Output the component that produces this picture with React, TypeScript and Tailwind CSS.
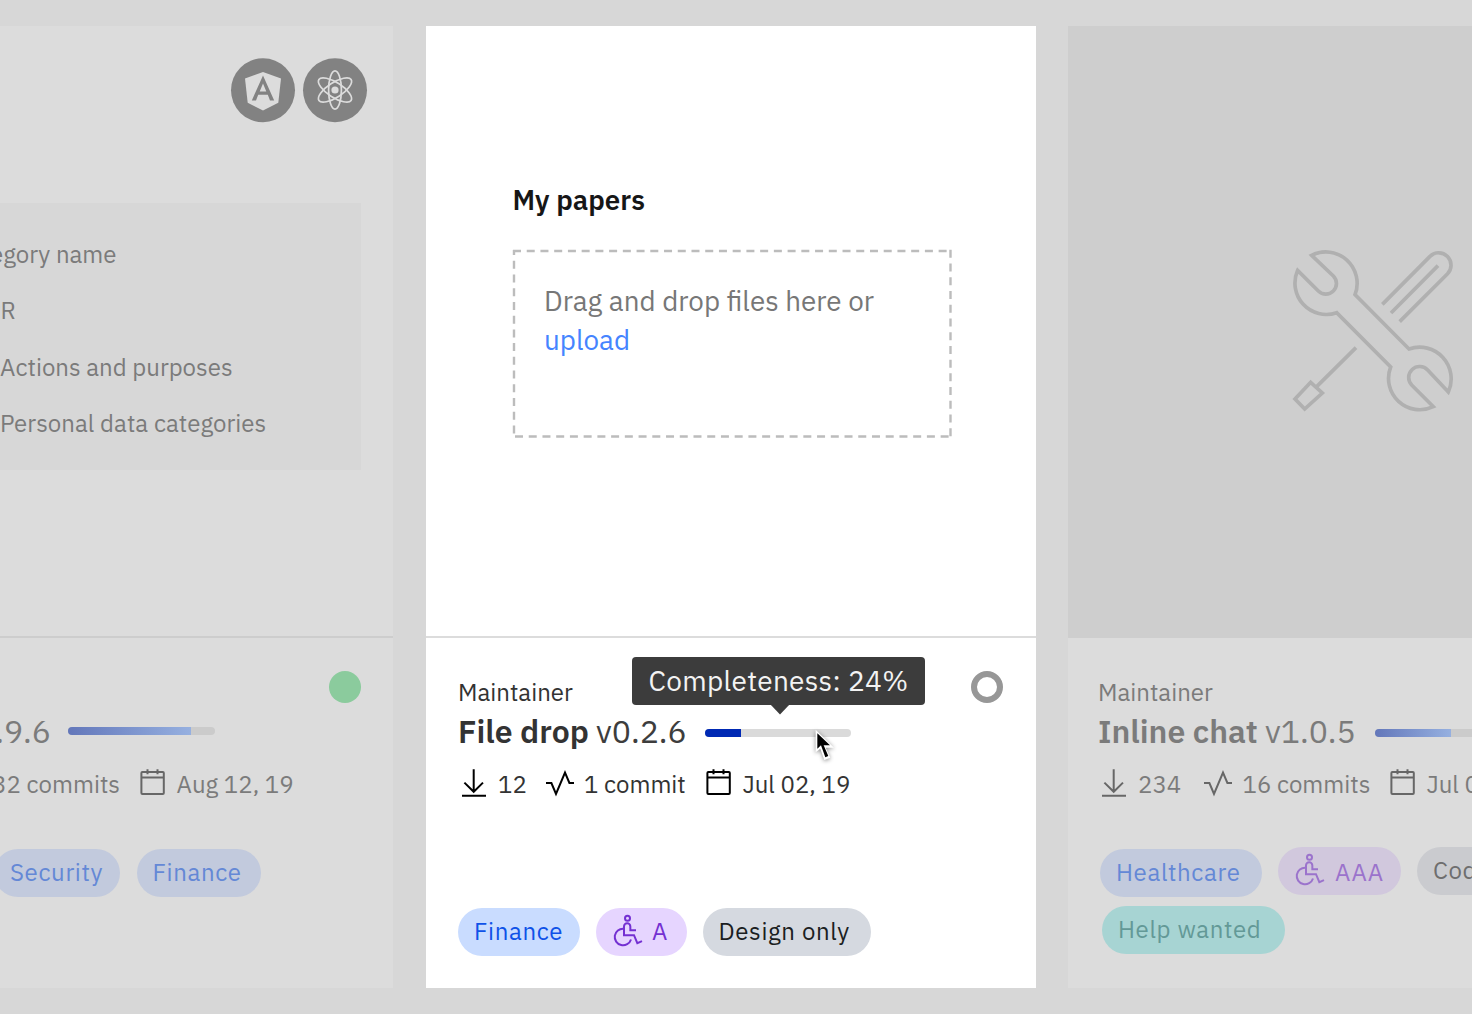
import type { ReactNode } from "react";

type IconProps = { className?: string };

function DownloadIcon({ className = "" }: IconProps) {
  return (
    <svg viewBox="0 0 32 32" fill="none" stroke="currentColor" strokeWidth="2" className={`h-8 w-8 shrink-0 ${className}`}>
      <path d="M15.7 .3V22.2M6.4 13.6l9.3 9.2 9.3-9.2M4 26.7h24" />
    </svg>
  );
}

function ActivityIcon({ className = "" }: IconProps) {
  return (
    <svg viewBox="0 0 32 32" fill="none" stroke="currentColor" strokeWidth="2" className={`h-8 w-8 shrink-0 ${className}`}>
      <path d="M2 14h5.4L12 25 21 3.500 25.400 14H30" />
    </svg>
  );
}

function CalendarIcon({ className = "" }: IconProps) {
  return (
    <svg viewBox="0 0 32 32" fill="none" stroke="currentColor" strokeWidth="2" className={`h-8 w-8 shrink-0 ${className}`}>
      <rect x="4.4" y="3" width="22.4" height="22" rx="1" />
      <path d="M4.4 8.4h22.4M10.5 .3v5M20.5 .3v5" />
    </svg>
  );
}

function WheelchairIcon() {
  return (
    <svg viewBox="51 40.5 96 108" fill="none" stroke="currentColor" strokeWidth="6" className="h-9 w-8 shrink-0">
      <circle cx="97.5" cy="53" r="7.5" />
      <path d="M123 89H106V78a9.500 9.500 0 0 0-19 0v26h30l10 24 14-6" />
      <path d="M86 84.5A25 25 0 1 0 108 117" />
    </svg>
  );
}

function AngularBadge() {
  return (
    <svg viewBox="231 58 64 64" className="h-16 w-16 overflow-visible">
      <circle cx="263" cy="90.3" r="32" fill="#828282" />
      <path fill="#dcdcdc" d="M263 72l18 6.500-2.700 24.200L263 110.500l-15.300-7.800L245 78.500z" />
      <path
        fill="#828282"
        fillRule="evenodd"
        d="M263 75.500L251.800 100.400H256L258.200 94.800H267.800L270 100.400H274.200zM263 83.500L266.300 91.400H259.700z"
      />
    </svg>
  );
}

function ReactBadge() {
  return (
    <svg viewBox="-32 -32 64 64" className="h-16 w-16 overflow-visible">
      <circle cy=".3" r="32" fill="#828282" />
      <g fill="none" stroke="#dcdcdc" strokeWidth="1.7">
        <ellipse rx="6.4" ry="19.2" />
        <ellipse rx="7.4" ry="19.2" transform="rotate(57)" />
        <ellipse rx="7.4" ry="19.2" transform="rotate(123)" />
      </g>
      <circle r="3.6" fill="#dcdcdc" />
    </svg>
  );
}

function ToolsIllustration() {
  return (
    <svg viewBox="0 0 606 600" fill="none" stroke="#b0b0b0" strokeWidth="11" className="ml-[202px] mt-[204px] h-[200px] w-[202px]">
      <path d="M125 76L190 138A31 31 0 0 1 145 183L83 121A94 94 0 0 0 200 248L362 411A94 94 0 0 0 490 530L425 465A32 32 0 0 1 473 420L535 486A95 95 0 0 0 417 357L255 194A94 94 0 0 0 125 76z" />
      <path d="M337 223L480 79A37 37 0 0 1 532 132L389 275M363 249L504 107M258 353L140 470M122 457l35 32-53 48-29-30z" />
    </svg>
  );
}

function DropOutline() {
  return (
    <svg viewBox="0 0 440 190" fill="none" stroke="#bcbcbc" strokeWidth="2.4" className="absolute -left-px top-0 h-[190px] w-[440px]">
      <path strokeDasharray="8 5.73" d="M1 2H439" />
      <path strokeDasharray="8 5.73" strokeDashoffset="3" d="M2 1V188" />
      <path strokeDasharray="8 5.73" d="M438.500 .8V188" />
      <path strokeDasharray="8 5.73" d="M3 187.500H439" />
    </svg>
  );
}

function Pointer() {
  return (
    <svg viewBox="0 0 70 105" className="absolute left-[108.5px] top-[-0.5px] h-[35px] w-[23.3px] overflow-visible drop-shadow-[0_1px_2px_rgba(0,0,0,0.45)]">
      <path fill="#fff" d="M8 2V70L22 59 34 93 52 86 38 56H63z" />
      <path fill="#000" d="M13 13V59L24 49 37 85 46 81 32 49H51z" />
    </svg>
  );
}

function Tag({ className, icon, children }: { className: string; icon?: ReactNode; children: ReactNode }) {
  return (
    <div className={`flex h-12 shrink-0 items-center rounded-full pl-4 tracking-[0.64px] ${className}`}>
      {icon}
      {children}
    </div>
  );
}

export default function App() {
  return (
    <div className="flex h-[1014px] w-[1472px] overflow-hidden whitespace-nowrap bg-[#d7d7d7] pt-[26px] font-['IBM_Plex_Sans',Roboto,sans-serif] text-2xl leading-8">
      {/* Category card */}
      <section className="flex h-[962px] w-[393px] shrink-0 flex-col overflow-hidden bg-[#dcdcdc] text-[#7b7b7b]">
        <div className="h-[612px] shrink-0 border-b-2 border-[#cdcdcd] pt-8">
          <div className="flex justify-end gap-2 pr-[26px]">
            <AngularBadge />
            <ReactBadge />
          </div>
          <ul className="mt-[81px] h-[267px] w-[361px] bg-[#d7d7d7] pt-[23px] leading-[56.3px]">
            <li className="flex w-[116.5px] justify-end">Category name</li>
            <li className="flex w-4 justify-end">GDPR</li>
            <li>Actions and purposes</li>
            <li className="tracking-[0.03px]">Personal data categories</li>
          </ul>
        </div>
        <div className="flex h-12 shrink-0 justify-end pr-8 pt-[33px]">
          <span className="h-8 w-8 shrink-0 rounded-full bg-[#8bcb9d]" />
        </div>
        <div className="mt-[22.5px] flex h-[47px] shrink-0 items-center">
          <div className="flex w-[51px] shrink-0 justify-end pb-[2px] text-[32px]">v0.9.6</div>
          <div className="ml-[17px] mb-[2px] h-2 w-[147px] overflow-hidden rounded-full bg-[#cbcbcb]">
            <div className="h-full w-[123px] bg-linear-to-r from-[#6377ba] to-[#96b0e0]" />
          </div>
        </div>
        <div className="mt-[12.5px] flex h-[33px] shrink-0">
          <div className="flex w-[120px] shrink-0 justify-end">32 commits</div>
          <CalendarIcon className="ml-[16.5px] mt-px text-[#676767]" />
          <span className="ml-2">Aug 12, 19</span>
        </div>
        <div className="mt-[48px] flex gap-[16.5px]">
          <Tag className="-ml-[6px] w-[126px] bg-[#c2cadd] pb-[2px] text-[#6488d6]">Security</Tag>
          <Tag className="w-[124.5px] bg-[#c2cadd] pb-[2px] text-[#6488d6]">Finance</Tag>
        </div>
      </section>

      {/* File drop card */}
      <section className="ml-[33px] flex h-[962px] w-[610px] shrink-0 flex-col bg-white text-[#333]">
        <div className="h-[612px] shrink-0 border-b-2 border-[#dcdcdc] pl-[87px] pt-[154px]">
          <h2 className="-ml-[0.5px] h-10 text-[27.7px] font-semibold leading-10 text-[#161616]">My papers</h2>
          <div className="relative mt-[29px] h-[190px] w-[440px] pl-[31px] pt-[33px] text-[27.8px] leading-[39px] text-[#777]">
            <DropOutline />
            <p>Drag and drop files here or</p>
            <p className="text-[#4584ff]">upload</p>
          </div>
        </div>
        <div className="flex h-[70.5px] shrink-0 justify-between pl-8 pr-[33px] pt-[33px]">
          <span className="pt-[4.5px]">Maintainer</span>
          <span className="h-8 w-8 rounded-full border-[6px] border-[#979797]" />
        </div>
        <div className="flex h-[47px] shrink-0 items-center pl-8 text-[32px]">
          <h3 className="w-[138px] shrink-0 pb-[2px] font-semibold">File drop</h3>
          <span className="w-[108.5px] shrink-0 pb-[2px] text-[#3d3d3d]">v0.2.6</span>
          <div className="relative mt-[2px] h-2 w-[146.5px]">
            <div className="h-full overflow-hidden rounded-full bg-[#dadada]">
              <div className="h-full w-[36.5px] bg-[#0029b4]" />
            </div>
            <div className="absolute -left-[73px] -top-[72px] flex h-12 w-[293px] items-center rounded-[4px] bg-[#3c3c3c] pl-[17px] text-[28px] tracking-[0.32px] text-[#f3f3f3]">
              Completeness: 24%
              <svg viewBox="0 0 20 11" className="absolute left-[138px] top-[47px] h-[11px] w-5">
                <path fill="#3c3c3c" d="M0 0h20L10 10.500z" />
              </svg>
            </div>
            <Pointer />
          </div>
        </div>
        <div className="mt-[12.5px] flex h-[33px] shrink-0 pl-8">
          <DownloadIcon className="mt-px text-black" />
          <span className="ml-2 w-[46px]">12</span>
          <ActivityIcon className="mt-px text-black" />
          <span className="ml-2 w-[119px]">1 commit</span>
          <CalendarIcon className="mt-px text-black" />
          <span className="ml-[7.5px]">Jul 02, 19</span>
        </div>
        <div className="mt-[107px] flex gap-4 pl-8">
          <Tag className="w-[122px] bg-[#c9dcff] pb-[2px] text-[#0f52e8]">Finance</Tag>
          <Tag className="w-[90.5px] bg-[#e6d5ff] text-[#7430d2]" icon={<WheelchairIcon />}>
            <span className="ml-2 pb-[2px]">A</span>
          </Tag>
          <Tag className="w-[168.5px] bg-[#d5d9e0] pb-[2px] text-[#1b1e22]">Design only</Tag>
        </div>
      </section>

      {/* Inline chat card */}
      <section className="ml-8 flex h-[962px] w-[610px] shrink-0 flex-col bg-[#dcdcdc] text-[#7b7b7b]">
        <div className="h-[612px] shrink-0 bg-[#cecece]">
          <div className="flex">
            <ToolsIllustration />
          </div>
        </div>
        <div className="h-[70.5px] shrink-0 pl-[30px] pt-[37.5px]">Maintainer</div>
        <div className="flex h-[47px] shrink-0 items-center pl-[30px] text-[32px]">
          <h3 className="w-[167px] shrink-0 pb-[2px] font-semibold">Inline chat</h3>
          <span className="w-[110px] shrink-0 pb-[2px]">v1.0.5</span>
          <div className="mt-[2px] h-2 w-[146px] shrink-0 overflow-hidden rounded-full bg-[#cbcbcb]">
            <div className="h-full w-[76px] bg-linear-to-r from-[#6377ba] to-[#96b0e0]" />
          </div>
        </div>
        <div className="mt-[12.5px] flex h-[33px] shrink-0 pl-[30px]">
          <DownloadIcon className="mt-px text-[#676767]" />
          <span className="ml-2 w-16">234</span>
          <ActivityIcon className="mt-px text-[#676767]" />
          <span className="ml-[8.5px] w-[144px]">16 commits</span>
          <CalendarIcon className="mt-px text-[#676767]" />
          <span className="ml-2">Jul 09, 19</span>
        </div>
        <div className="mt-[45.5px] flex gap-4 pl-8">
          <Tag className="mt-[2px] w-[162px] bg-[#c2cadd] pb-[2px] text-[#6488d6]">Healthcare</Tag>
          <Tag className="w-[123px] bg-[#d1c8dd] text-[#9b73cc]" icon={<WheelchairIcon />}>
            <span className="ml-[9px] pt-[2px]">AAA</span>
          </Tag>
          <Tag className="w-[150px] bg-[#cacbcf] pb-[2px] text-[#6e6e6e]">Code only</Tag>
        </div>
        <div className="mt-[9px] flex pl-[34px]">
          <Tag className="w-[182.5px] bg-[#a7d4d3] pb-[2px] text-[#639997]">Help wanted</Tag>
        </div>
      </section>
    </div>
  );
}
